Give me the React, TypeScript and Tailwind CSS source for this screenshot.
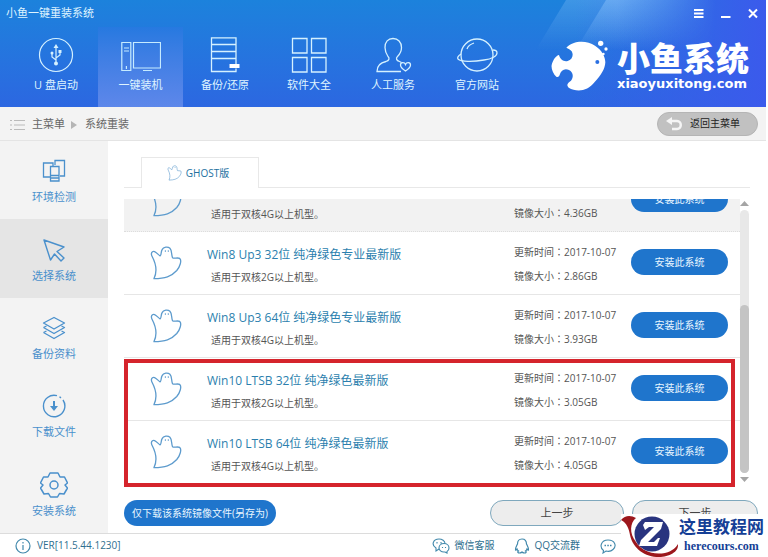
import React from "react";

type IconProps = { className?: string };

function UsbIcon() {
  return (
    <svg viewBox="0 0 36 36" className="size-9" fill="none" stroke="#d5f1ff" strokeWidth="1.2">
      <circle cx="18" cy="18" r="16.5" />
      <path d="M18 26V10M18 23l-4-3v-3M18 21l4-3v-3" />
      <path d="M18 7l2.500 4h-5z" fill="#d5f1ff" stroke="none" />
      <circle cx="18" cy="26.5" r="2" fill="#d5f1ff" stroke="none" />
      <circle cx="14" cy="16" r="1.5" fill="#d5f1ff" stroke="none" />
      <path d="M20.500 13h3v3h-3z" fill="#d5f1ff" stroke="none" />
    </svg>
  );
}

function ComputerIcon() {
  return (
    <svg viewBox="0 0 40 36" className="h-9 w-10" fill="none" stroke="#c6ebff" strokeWidth="1.2">
      <path d="M.8 5.500h9v28h-9zM3 11h5M3 14h5M12.500 5.500h27v25.500h-27zM22 33.500h9M5.400 29v3" />
    </svg>
  );
}

function ServerIcon() {
  return (
    <svg viewBox="0 0 36 36" className="size-9" fill="none" stroke="#d5f1ff" strokeWidth="1.3">
      <path d="M29 28V.8H4.500v33.700H29v-3M4.500 7.500H29M4.500 14.500H29M4.500 21.500H29" />
      <path d="M22.500 27h10v4h-10z" fill="#fff" stroke="none" />
    </svg>
  );
}

function GridIcon() {
  return (
    <svg viewBox="0 0 36 36" className="size-9" fill="none" stroke="#d5f1ff" strokeWidth="1.3">
      <path d="M1.500 1.500h14.500v14.500H1.500zM20.500 1.500H35v14.500H20.500zM1.500 20.500h14.500V35H1.500zM20.500 20.500H35V35H20.500z" />
    </svg>
  );
}

function PersonIcon() {
  return (
    <svg viewBox="0 0 38 36" className="h-9 w-[38px]" fill="none" stroke="#d5f1ff" strokeWidth="1.3">
      <path d="M27 34.500H3c0-6 4-9 9-10 3-1 4-3 2-5-2-3-3-6-3-9C11 5 14 1.500 19 1.500s8.500 3.500 8.500 9c0 3-1 6-4 9-2 2-1 4 2 5l2 1" />
      <path d="M31.500 34c-3-2-5-4-5-6 0-3 4-3 5-.5 1-2.500 5-2.500 5 .5 0 2-2 4-5 6z" />
    </svg>
  );
}

function PlanetIcon() {
  return (
    <svg viewBox="0 0 42 36" className="h-9 w-[42px]" fill="none" stroke="#d5f1ff" strokeWidth="1.3">
      <circle cx="21" cy="18" r="16" />
      <path d="M5 17c-3 2-4 4-3 5 3 3 15 3 26 1 8-1 13-4 13-7 0-2-2-3-4-3M11 12c1-3 4-5 7-6" />
    </svg>
  );
}

function FishLogo() {
  return (
    <svg viewBox="394 120 174 156" className="h-[52px] w-[58px]" fill="#fff" aria-hidden="true">
      <path d="M440 143C462 120 502 121 526 137C546 150 557 169 557 187C556 207 544 226 525 246C503 275 471 277 447 263C438 254 446 248 454 242C463 230 460 216 448 210C434 204 424 212 421 222C419 229 415 233 410 230C401 222 394 207 396 195C400 179 410 166 418 165C421 178 432 186 444 183C457 180 463 166 456 154C452 148 446 146 440 143Z" />
      <circle cx="533" cy="186" r="6" fill="#2b70e2" />
      <circle cx="543" cy="130" r="8" />
      <circle cx="559" cy="147" r="5" />
      <circle cx="551" cy="162" r="4" />
    </svg>
  );
}

function GhostIcon({ className }: IconProps) {
  return (
    <svg viewBox="0 0 98 108" className={className} fill="none" stroke="#5d9bcd" strokeWidth="4" strokeLinejoin="round" aria-hidden="true">
      <path d="M12 102C22 82 19 58 7 35C1 24 6 17 14 19C21 22 25 29 31 32C35 30 33 21 37 13C41 4 55 3 61 9C68 16 65 29 69 38C75 42 83 36 91 40C98 46 92 65 82 77C65 96 46 101 12 102Z" />
      <path d="M47 15v5M56 15v5" strokeWidth="3" />
    </svg>
  );
}

function DetectIcon() {
  return (
    <svg viewBox="0 0 24 24" className="size-6" fill="none" stroke="#4a90cc" strokeWidth="1.300">
      <path d="M8 18H1.500V4H11v3M13 6V1.500h9.500V17H18M8.500 7.500h8.500V22H8.500zM8.500 16.500H17M8.500 19H17" />
    </svg>
  );
}

function CursorIcon() {
  return (
    <svg viewBox="0 0 24 24" className="size-6" fill="none" stroke="#4a90cc" strokeWidth="1.400" strokeLinejoin="round">
      <path d="M2 2l20 7-7 4.500 7 6.500-3 3-6.500-7L8.500 22z" />
    </svg>
  );
}

function LayersIcon() {
  return (
    <svg viewBox="0 0 24 24" className="size-6" fill="none" stroke="#4a90cc" strokeWidth="1.300" strokeLinejoin="round">
      <path d="M12 1.500l10.500 5.500L12 13 1.500 7zM1.500 11.500l3-1.500M1.500 11.500L12 17.500l10.500-6-3-1.500M1.500 16.500l3-1.500M1.500 16.500L12 22.500l10.500-6-3-1.500" />
    </svg>
  );
}

function DownloadIcon() {
  return (
    <svg viewBox="0 0 24 24" className="size-6" fill="none" stroke="#4a90cc" strokeWidth="1.400">
      <path d="M21 6A10.700 10.700 0 1 1 15 1.700M17.500 2.800l1.500 1.100" />
      <path d="M12 7v7" strokeWidth="2" />
      <path d="M8 12h8l-4 5z" fill="#4a90cc" stroke="none" />
    </svg>
  );
}

function GearIcon() {
  return (
    <svg viewBox="0 0 28 28" className="size-7" fill="none" stroke="#4a90cc" strokeWidth="1.500" strokeLinejoin="round">
      <path d="M10 2h8l2 4 4.500 0 3 6-2.500 2 2.500 3-3.500 6-4.500-.5-2 3.500h-7l-2-3.500-4.500.5-3.500-6 2.500-3-2.500-2 3-6H8z" />
      <circle cx="14" cy="14" r="4" />
    </svg>
  );
}

function WechatIcon() {
  return (
    <svg viewBox="0 0 18 16" className="h-4 w-[18px]" fill="none" stroke="#4289ac" strokeWidth="1.100">
      <path d="M7 11l-3 2v-3C-1 7 1 1 7 1c3 0 6 2 6 4.500" />
      <path d="M12 5.500c3 0 5 2 5 4.500 0 1.500-1 3-2 3.500V15l-2-1c-4 .5-6-2-6-4 0-2.500 2-4.500 5-4.500zM5 4v1.500M9 4v1.500M10.500 9v1M13.500 9v1" />
    </svg>
  );
}

function QqIcon() {
  return (
    <svg viewBox="0 0 16 16" className="size-4" fill="none" stroke="#4289ac" strokeWidth="1.200">
      <path d="M8 1C5 1 3.500 3 3.500 6 2 9 1 10.500 1.500 12c.5.500 1-.5 1.500-1 .3 1 .8 1.500 1.500 2-1.500 1-.5 2 1 2 1 0 2-.5 2.500-1 .5.500 1.500 1 2.500 1 1.500 0 2.500-1 1-2 .7-.5 1.200-1 1.500-2 .5.500 1 1.500 1.500 1 .5-1.500-.5-3-2-6C12.500 3 11 1 8 1z" />
    </svg>
  );
}

function ChatIcon() {
  return (
    <svg viewBox="0 0 16 16" className="size-4" fill="none" stroke="#4289ac" strokeWidth="1.100">
      <path d="M3.500 12.500C-1 9 1 2 8 2s9 6 5 9.500c-2 2-5 2-7 1.500L3 15z" />
      <path d="M4.500 7.500h1.500M7.300 7.500h1.500M10 7.500h1.500" strokeWidth="1.500" />
    </svg>
  );
}

const navItems = [
  { label: "U 盘启动", icon: <UsbIcon /> },
  { label: "一键装机", icon: <ComputerIcon />, active: true },
  { label: "备份/还原", icon: <ServerIcon /> },
  { label: "软件大全", icon: <GridIcon /> },
  { label: "人工服务", icon: <PersonIcon /> },
  { label: "官方网站", icon: <PlanetIcon /> },
];

const steps = [
  { label: "环境检测", icon: <DetectIcon /> },
  { label: "选择系统", icon: <CursorIcon />, active: true },
  { label: "备份资料", icon: <LayersIcon /> },
  { label: "下载文件", icon: <DownloadIcon /> },
  { label: "安装系统", icon: <GearIcon /> },
];

const systems = [
  { name: "Win7 64位 纯净绿色旗舰最新版", ram: "4G", size: "4.36GB", hovered: true },
  { name: "Win8 Up3 32位 纯净绿色专业最新版", ram: "2G", size: "2.86GB" },
  { name: "Win8 Up3 64位 纯净绿色专业最新版", ram: "4G", size: "3.93GB" },
  { name: "Win10 LTSB 32位 纯净绿色最新版", ram: "2G", size: "3.05GB" },
  { name: "Win10 LTSB 64位 纯净绿色最新版", ram: "4G", size: "4.05GB" },
];

function Header() {
  return (
    <header className="relative h-[107px] shrink-0 overflow-hidden bg-linear-to-b from-[#1c82dc] to-[#2c67e1] text-[#dff4ff]">
      <div className="absolute inset-y-0 right-0 w-48 bg-linear-to-r from-transparent to-[#3b5aec]" />
      <svg viewBox="0 0 180 56" className="absolute top-0 right-[50px] h-14 w-[180px]" aria-hidden="true">
        <defs>
          <linearGradient id="beam" gradientUnits="userSpaceOnUse" x1="0" y1="0" x2="0" y2="50">
            <stop offset="0" stopColor="#9accff" stopOpacity=".5" />
            <stop offset="1" stopColor="#9accff" stopOpacity="0" />
          </linearGradient>
          <linearGradient id="fade" x1="0" y1="0" x2="1" y2="0">
            <stop offset=".45" stopColor="#fff" />
            <stop offset="1" stopColor="#000" />
          </linearGradient>
          <mask id="beamFade">
            <path d="M0 0h180v56H0z" fill="url(#fade)" />
          </mask>
        </defs>
        <g mask="url(#beamFade)" fill="url(#beam)">
          <path d="M30 0H180V56H-4z" opacity=".55" />
          <path d="M70 0H180V56H36z" opacity=".8" />
        </g>
      </svg>
      <div className="relative flex h-[27px] items-center justify-between pr-[7px] pl-1.5">
        <h1 className="text-[11px]">小鱼一键重装系统</h1>
        <div className="flex items-center gap-[15px]">
          <button aria-label="菜单" className="grid size-3 place-items-center">
            <svg viewBox="0 0 12 12" className="size-3" stroke="#fff" strokeWidth="1.800"><path d="M1 2h9.500M1 5.500h9.500M1 9h9.500" /></svg>
          </button>
          <button aria-label="最小化" className="grid size-3 place-items-center">
            <svg viewBox="0 0 12 12" className="size-3" stroke="#fff" strokeWidth="2"><path d="M1 9h9.500" /></svg>
          </button>
          <button aria-label="关闭" className="grid size-3 place-items-center">
            <svg viewBox="0 0 12 12" className="size-3" stroke="#fff" strokeWidth="2"><path d="M2 1.500l8 8M10 1.500l-8 8" /></svg>
          </button>
        </div>
      </div>
      <div className="relative flex h-20 justify-between pr-4 pl-[14px]">
        <nav className="flex">
          {navItems.map((item) => (
            <a
              key={item.label}
              href="#"
              className={
                item.active
                  ? "flex w-[85px] flex-col items-center gap-1 bg-linear-to-b from-[#2679e0] to-[#5d87ea] pt-2.5"
                  : "flex w-[84px] flex-col items-center gap-1 pt-2.5"
              }
            >
              {item.icon}
              <span className="text-[11px] leading-4">{item.label}</span>
            </a>
          ))}
        </nav>
        <div className="flex gap-2 pt-[13px] text-white">
          <FishLogo />
          <div className="flex w-[133px] flex-col">
            <span className="text-[33px] leading-[38px] font-black">小鱼系统</span>
            <span className="font-['DejaVu_Sans',sans-serif] text-[13px] leading-3 font-bold">xiaoyuxitong.com</span>
          </div>
        </div>
      </div>
    </header>
  );
}

function Breadcrumb() {
  return (
    <div className="flex h-[34px] shrink-0 items-center justify-between border-b border-[#e4e4e4] bg-[#f3f3f3] pr-2 pl-2.5 text-[11px] text-[#666]">
      <nav className="flex items-center gap-1.5 pt-0.5">
        <svg viewBox="0 0 16 12" className="h-3 w-4" stroke="#bbb" strokeWidth="1.200" aria-hidden="true">
          <path d="M0 1.500h2M4 1.500h11M0 6h2M4 6h11M0 10.500h2M4 10.500h11" />
        </svg>
        <a href="#">主菜单</a>
        <svg viewBox="0 0 8 8" className="size-2" fill="#b5b5b5" aria-hidden="true"><path d="M0 0l6 4-6 4z" /></svg>
        <a href="#">系统重装</a>
      </nav>
      <button className="flex h-6 w-[101px] items-center gap-2 rounded-full border border-[#b5b5b5] bg-[#c1c1c1] pl-2 text-[10px] text-[#222]">
        <svg viewBox="0 0 16 14" className="h-3.5 w-4" aria-hidden="true">
          <path d="M5 4h6c5 0 5 8 0 8H6" fill="none" stroke="#f5f5f5" strokeWidth="2.500" />
          <path d="M0 4l6-4v8z" fill="#f5f5f5" />
        </svg>
        返回主菜单
      </button>
    </div>
  );
}

function Sidebar() {
  return (
    <nav className="flex w-[108px] shrink-0 flex-col bg-[#f3f3f3]">
      {steps.map((step) => (
        <a
          key={step.label}
          href="#"
          className={
            step.active
              ? "flex flex-1 flex-col items-center justify-center gap-1 bg-[#e5e5e5] pt-0.5"
              : "flex flex-1 flex-col items-center justify-center gap-1 pt-0.5"
          }
        >
          <span className="grid h-7 place-items-center">{step.icon}</span>
          <span className="text-[11px] leading-4 text-[#4a90cc]">{step.label}</span>
        </a>
      ))}
    </nav>
  );
}

function Colon() {
  return <span className="font-['Noto_Sans_CJK_TC',sans-serif]" lang="zh-TW">：</span>;
}

function SystemList() {
  return (
    <ul className="flex min-w-0 flex-1 flex-col justify-end overflow-hidden">
      {systems.map((system) => (
        <li
          key={system.name}
          className={
            system.hovered
              ? "flex h-[63px] shrink-0 items-center border-b border-dotted border-[#ddd] bg-[#f2f2f2] pr-3"
              : "flex h-[63px] shrink-0 items-center border-b border-[#e6e6e6] pr-3 last:border-transparent"
          }
        >
          <GhostIcon className="ml-[26px] h-9 w-8 shrink-0" />
          <div className="ml-[25px] flex-1 pt-1.5">
            <h2 className="text-[12px] leading-4 text-[#2b7fae]">{system.name}</h2>
            <p className="mt-1.5 pl-1 text-[10px] leading-4 text-[#555]">适用于双核{system.ram}以上机型。</p>
          </div>
          <div className="w-[117px] pt-0.5 text-[10px] leading-4 text-[#555]">
            <p>更新时间<Colon />2017-10-07</p>
            <p className="mt-2">镜像大小<Colon />{system.size}</p>
          </div>
          <button className="mb-0.5 h-[26px] w-[97px] rounded-full bg-[#1f75cc] text-[10px] text-[#e8f6ff]">安装此系统</button>
        </li>
      ))}
    </ul>
  );
}

function Scrollbar() {
  return (
    <div className="flex w-[9px] flex-col items-center gap-1 py-0.5" aria-hidden="true">
      <svg viewBox="0 0 9 5" className="h-[5px] w-[9px]" fill="#a5a5a5"><path d="M0 5l4.500-5L9 5z" /></svg>
      <div className="flex w-full flex-1 flex-col justify-end rounded-full bg-[#e8e8e8]">
        <div className="h-[64%] rounded-full bg-[#c4c4c4]" />
      </div>
      <svg viewBox="0 0 9 5" className="h-[5px] w-[9px]" fill="#a5a5a5"><path d="M0 0l4.500 5L9 0z" /></svg>
    </div>
  );
}

function Watermark() {
  return (
    <div className="absolute right-0 bottom-0 flex h-[43px] w-[147px] items-center bg-white">
      <svg viewBox="0 0 58 43" className="h-[43px] w-[58px]" aria-hidden="true">
        <path d="M0 6C4 1 10 1 15 4C9 9 8 19 15 28C21 37 31 41 44 39C52 37 55 33 57 30C58 38 48 43 38 43C24 43 12 35 9 21C8 15 6 9 0 6Z" fill="#9c171c" />
        <circle cx="31" cy="20" r="17.500" fill="#29347f" />
        <path d="M22 11l2-3h18l-2 7-13 13h6l4-4h2l-3 8H18l2-6 13-13h-5l-4 3z" fill="#fff" />
      </svg>
      <div className="flex flex-col items-center font-['Liberation_Serif','Noto_Sans_CJK_SC',serif] font-bold text-[#153f96]">
        <span className="text-[17px] leading-5 whitespace-nowrap">这里教程网</span>
        <span className="text-[12px] leading-4">herecours.com</span>
      </div>
    </div>
  );
}

export default function App() {
  return (
    <div className="relative flex h-screen flex-col bg-white pr-0.5 font-['Open_Sans','Noto_Sans_CJK_SC',sans-serif]">
      <Header />
      <Breadcrumb />
      <div className="flex min-h-0 flex-1">
        <Sidebar />
        <main className="flex min-w-0 flex-1 flex-col pt-4 pb-[7px] pl-4">
          <div role="tablist" className="mr-4 flex border-b border-[#e8e8e8] pl-[17px]">
            <button
              role="tab"
              aria-selected="true"
              className="-mb-px flex h-[31px] w-[118px] items-center justify-center gap-1 border border-b-0 border-[#e8e8e8] bg-white pr-1 text-[10px] text-[#24719f]"
            >
              <GhostIcon className="h-4 w-[15px]" />
              GHOST版
            </button>
          </div>
          <div className="relative mt-[11px] mr-[17px] flex min-h-0 flex-1">
            <SystemList />
            <Scrollbar />
            <div className="pointer-events-none absolute right-3.5 -bottom-[3px] left-0 h-32 border-4 border-[#d5242c]" />
          </div>
          <div className="mt-4 flex h-[26px] shrink-0 gap-2 pr-2">
            <button className="mr-auto w-[152px] rounded-full bg-[#1f75cc] text-[10px] text-[#e8f6ff]">仅下载该系统镜像文件(另存为)</button>
            <button className="w-[134px] rounded-full border border-[#7fa8bd] bg-[#ededed] text-[11px] text-[#444]">上一步</button>
            <button className="w-[126px] rounded-full border border-[#7fa8bd] bg-[#ededed] text-[11px] text-[#444]">下一步</button>
          </div>
        </main>
      </div>
      <footer className="flex h-6 shrink-0 items-center justify-between border-t border-[#dcdcdc] pr-[150px] pl-[15px] text-[10px] text-[#2f6f8f]">
        <div className="flex items-center gap-1.5">
          <svg viewBox="0 0 16 16" className="size-4" fill="none" stroke="#4289ac" strokeWidth="1.200" aria-hidden="true">
            <circle cx="8" cy="8" r="7" />
            <path d="M8 7v5M8 4v1.500" />
          </svg>
          <span>VER[11.5.44.1230]</span>
        </div>
        <div className="flex items-center gap-5">
          <a href="#" className="flex items-center gap-1"><WechatIcon />微信客服</a>
          <a href="#" className="flex items-center gap-1"><QqIcon />QQ交流群</a>
          <a href="#" aria-label="在线咨询"><ChatIcon /></a>
        </div>
      </footer>
      <Watermark />
    </div>
  );
}
